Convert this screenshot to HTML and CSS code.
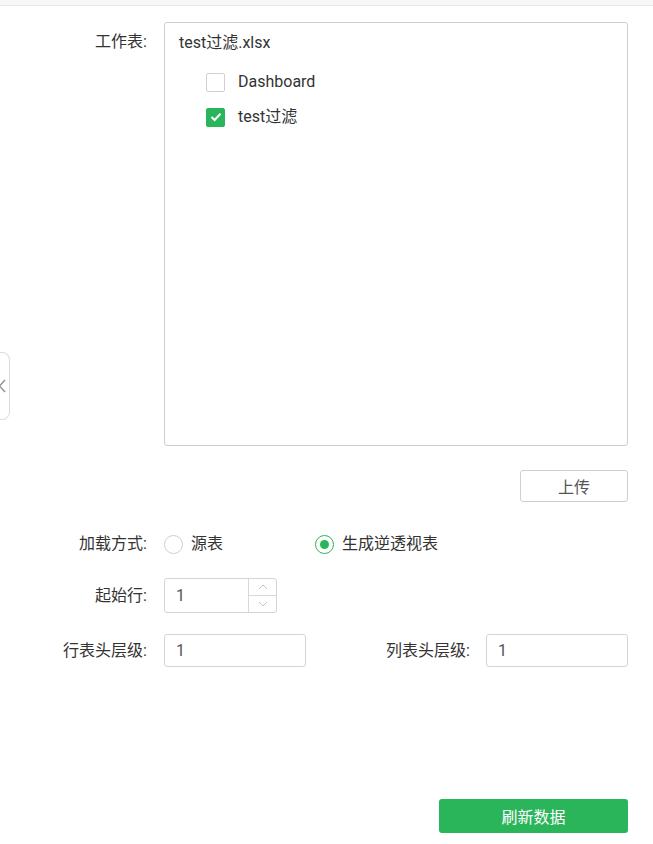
FILE: index.html
```html
<!DOCTYPE html>
<html lang="zh-CN">
<head>
<meta charset="utf-8">
<title>数据加载</title>
<link rel="stylesheet" href="styles.css">
</head>
<body>
<div class="topbar"></div>
<div class="side-tab">
  <svg class="side-chevron" width="10" height="14" viewBox="0 0 10 14"><path d="M7 1 L1.5 7 L7 13" fill="none" stroke="#8f8f8f" stroke-width="1.4"/></svg>
</div>
<main class="form">
  <div class="row row-top">
    <div class="label label-top">工作表:</div>
    <div class="sheet-box">
      <div class="file-name">test过滤.xlsx</div>
      <label class="check-item">
        <span class="checkbox"></span>
        <span class="check-text">Dashboard</span>
      </label>
      <label class="check-item">
        <span class="checkbox checked">
          <svg width="12" height="10" viewBox="0 0 12 10"><path d="M1.5 5 L4.6 8 L10.5 1.8" fill="none" stroke="#fff" stroke-width="2"/></svg>
        </span>
        <span class="check-text">test过滤</span>
      </label>
    </div>
  </div>
  <div class="upload-row">
    <button class="btn-upload">上传</button>
  </div>
  <div class="row row-radio">
    <div class="label">加载方式:</div>
    <label class="radio-item radio-first">
      <span class="radio"></span>
      <span>源表</span>
    </label>
    <label class="radio-item">
      <span class="radio checked"><span class="dot"></span></span>
      <span>生成逆透视表</span>
    </label>
  </div>
  <div class="row row-start">
    <div class="label">起始行:</div>
    <div class="number-input">
      <span class="num-value">1</span>
      <span class="spinner">
        <span class="spin-btn"><svg width="10" height="6" viewBox="0 0 10 6"><path d="M1 5 L5 1 L9 5" fill="none" stroke="#c4c4c4" stroke-width="1"/></svg></span>
        <span class="spin-btn spin-down"><svg width="10" height="6" viewBox="0 0 10 6"><path d="M1 1 L5 5 L9 1" fill="none" stroke="#c4c4c4" stroke-width="1"/></svg></span>
      </span>
    </div>
  </div>
  <div class="row row-levels">
    <div class="label">行表头层级:</div>
    <div class="text-input">1</div>
    <div class="spacer"></div>
    <div class="label-inline">列表头层级:</div>
    <div class="text-input text-input-right">1</div>
  </div>
  <div class="footer">
    <button class="btn-primary">刷新数据</button>
  </div>
</main>
</body>
</html>
```
FILE: styles.css
```css
* { box-sizing: border-box; }
html, body { margin: 0; padding: 0; }
body {
  width: 653px;
  height: 844px;
  background: #fff;
  font-family: Roboto, "Noto Sans CJK SC", sans-serif;
  font-size: 16px;
  color: #333;
  position: relative;
  overflow: hidden;
}
.topbar {
  height: 6px;
  background: #f6f7f9;
  border-bottom: 1px solid #e6e7e9;
}
.side-tab {
  position: absolute;
  left: -2px;
  top: 352px;
  width: 12px;
  height: 68px;
  border: 1px solid #dcdcdc;
  border-left: none;
  border-radius: 0 8px 8px 0;
  background: #fff;
}
.side-chevron {
  position: absolute;
  left: 0;
  top: 26px;
}
.form {
  padding: 16px 25px 0 0;
}
.row {
  display: flex;
  align-items: center;
  line-height: 22px;
}
.label {
  width: 164px;
  padding-right: 17px;
  text-align: right;
  flex-shrink: 0;
  white-space: nowrap;
}
.row-top { align-items: flex-start; }
.label-top { padding-top: 9px; }
.sheet-box {
  flex: 1;
  height: 424px;
  border: 1px solid #cfcfcf;
  border-radius: 3px;
  padding: 9px 14px;
}
.file-name {
  line-height: 22px;
  height: 22px;
}
.check-item {
  display: flex;
  align-items: center;
  margin-left: 27px;
  height: 22px;
  margin-top: 17px;
}
.check-item + .check-item { margin-top: 13px; }
.checkbox {
  width: 19px;
  height: 19px;
  border: 1px solid #d0d0d0;
  border-radius: 2px;
  display: inline-flex;
  align-items: center;
  justify-content: center;
  margin-right: 13px;
  flex-shrink: 0;
}
.checkbox.checked {
  background: #2bb55b;
  border-color: #2bb55b;
}
.upload-row {
  display: flex;
  justify-content: flex-end;
  margin-top: 24px;
}
.btn-upload {
  width: 108px;
  height: 32px;
  background: #fff;
  border: 1px solid #cfcfcf;
  border-radius: 3px;
  font-family: inherit;
  font-size: 16px;
  color: #555;
  padding: 0;
}
.row-radio {
  margin-top: 27px;
  height: 30px;
}
.radio-item {
  display: flex;
  align-items: center;
  gap: 8px;
}
.radio-first { width: 151px; }
.radio {
  width: 19px;
  height: 19px;
  border: 1px solid #d0d0d0;
  border-radius: 50%;
  display: inline-flex;
  align-items: center;
  justify-content: center;
}
.radio.checked { border-color: #2bb55b; }
.dot {
  width: 9px;
  height: 9px;
  border-radius: 50%;
  background: #2bb55b;
}
.row-start { margin-top: 19px; }
.number-input {
  width: 113px;
  height: 35px;
  border: 1px solid #d4d4d4;
  border-radius: 3px;
  display: flex;
}
.num-value {
  flex: 1;
  padding-left: 11px;
  line-height: 33px;
  color: #555;
}
.spinner {
  width: 28px;
  border-left: 1px solid #d8d8d8;
  display: flex;
  flex-direction: column;
}
.spin-btn {
  flex: 1;
  display: flex;
  align-items: center;
  justify-content: center;
}
.spin-down { border-top: 1px solid #d8d8d8; }
.row-levels { margin-top: 21px; }
.text-input {
  width: 142px;
  height: 33px;
  border: 1px solid #d4d4d4;
  border-radius: 3px;
  padding-left: 11px;
  line-height: 31px;
  color: #555;
}
.spacer { flex: 1; }
.label-inline {
  padding-right: 16px;
  white-space: nowrap;
}
.footer {
  display: flex;
  justify-content: flex-end;
  margin-top: 132px;
}
.btn-primary {
  width: 189px;
  height: 34px;
  background: #2bb55b;
  border: none;
  border-radius: 3px;
  color: #fff;
  font-family: inherit;
  font-size: 16px;
  padding: 0;
}
```
